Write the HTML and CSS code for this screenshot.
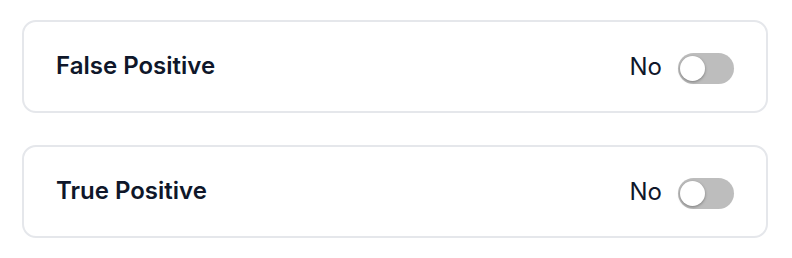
FILE: index.html
```html
<!DOCTYPE html>
<html lang="en">
<head>
    <meta charset="UTF-8">
    <meta name="viewport" content="width=device-width, initial-scale=1.0">
    <title>Classification</title>
    <link rel="stylesheet" href="styles.css">
</head>
<body>
    <div class="settings">
        <div class="setting-card">
            <span class="setting-label">False Positive</span>
            <label class="setting-control">
                <span class="setting-value">No</span>
                <span class="switch"><span class="knob"></span></span>
            </label>
        </div>
        <div class="setting-card">
            <span class="setting-label">True Positive</span>
            <label class="setting-control">
                <span class="setting-value">No</span>
                <span class="switch"><span class="knob"></span></span>
            </label>
        </div>
    </div>
</body>
</html>
```

FILE: styles.css
```css
body {
    margin: 0;
    font-family: Inter, "Noto Sans", sans-serif;
    background-color: #ffffff;
    color: #0f172a;
}
.settings {
    display: flex;
    flex-direction: column;
    gap: 32px;
    width: 746px;
    padding: 20px 0 0 22px;
}
.setting-card {
    display: flex;
    align-items: center;
    justify-content: space-between;
    box-sizing: border-box;
    height: 93px;
    padding: 0 32px 0 32px;
    border: 2px solid #e5e7eb;
    border-radius: 14px;
}
.setting-label {
    font-size: 24px;
    font-weight: 600;
    margin-top: -3px;
}
.setting-control {
    display: flex;
    align-items: center;
    gap: 16px;
}
.setting-value {
    font-size: 24px;
    font-weight: 400;
}
.switch {
    position: relative;
    display: block;
    width: 56px;
    height: 31px;
    margin-top: 4px;
    border-radius: 16px;
    background-color: #bdbdbd;
}
.knob {
    position: absolute;
    top: 3px;
    left: 2px;
    width: 25px;
    height: 25px;
    border-radius: 50%;
    background-color: #ffffff;
    box-shadow: 0 1px 3px rgba(0, 0, 0, 0.35);
}
```
